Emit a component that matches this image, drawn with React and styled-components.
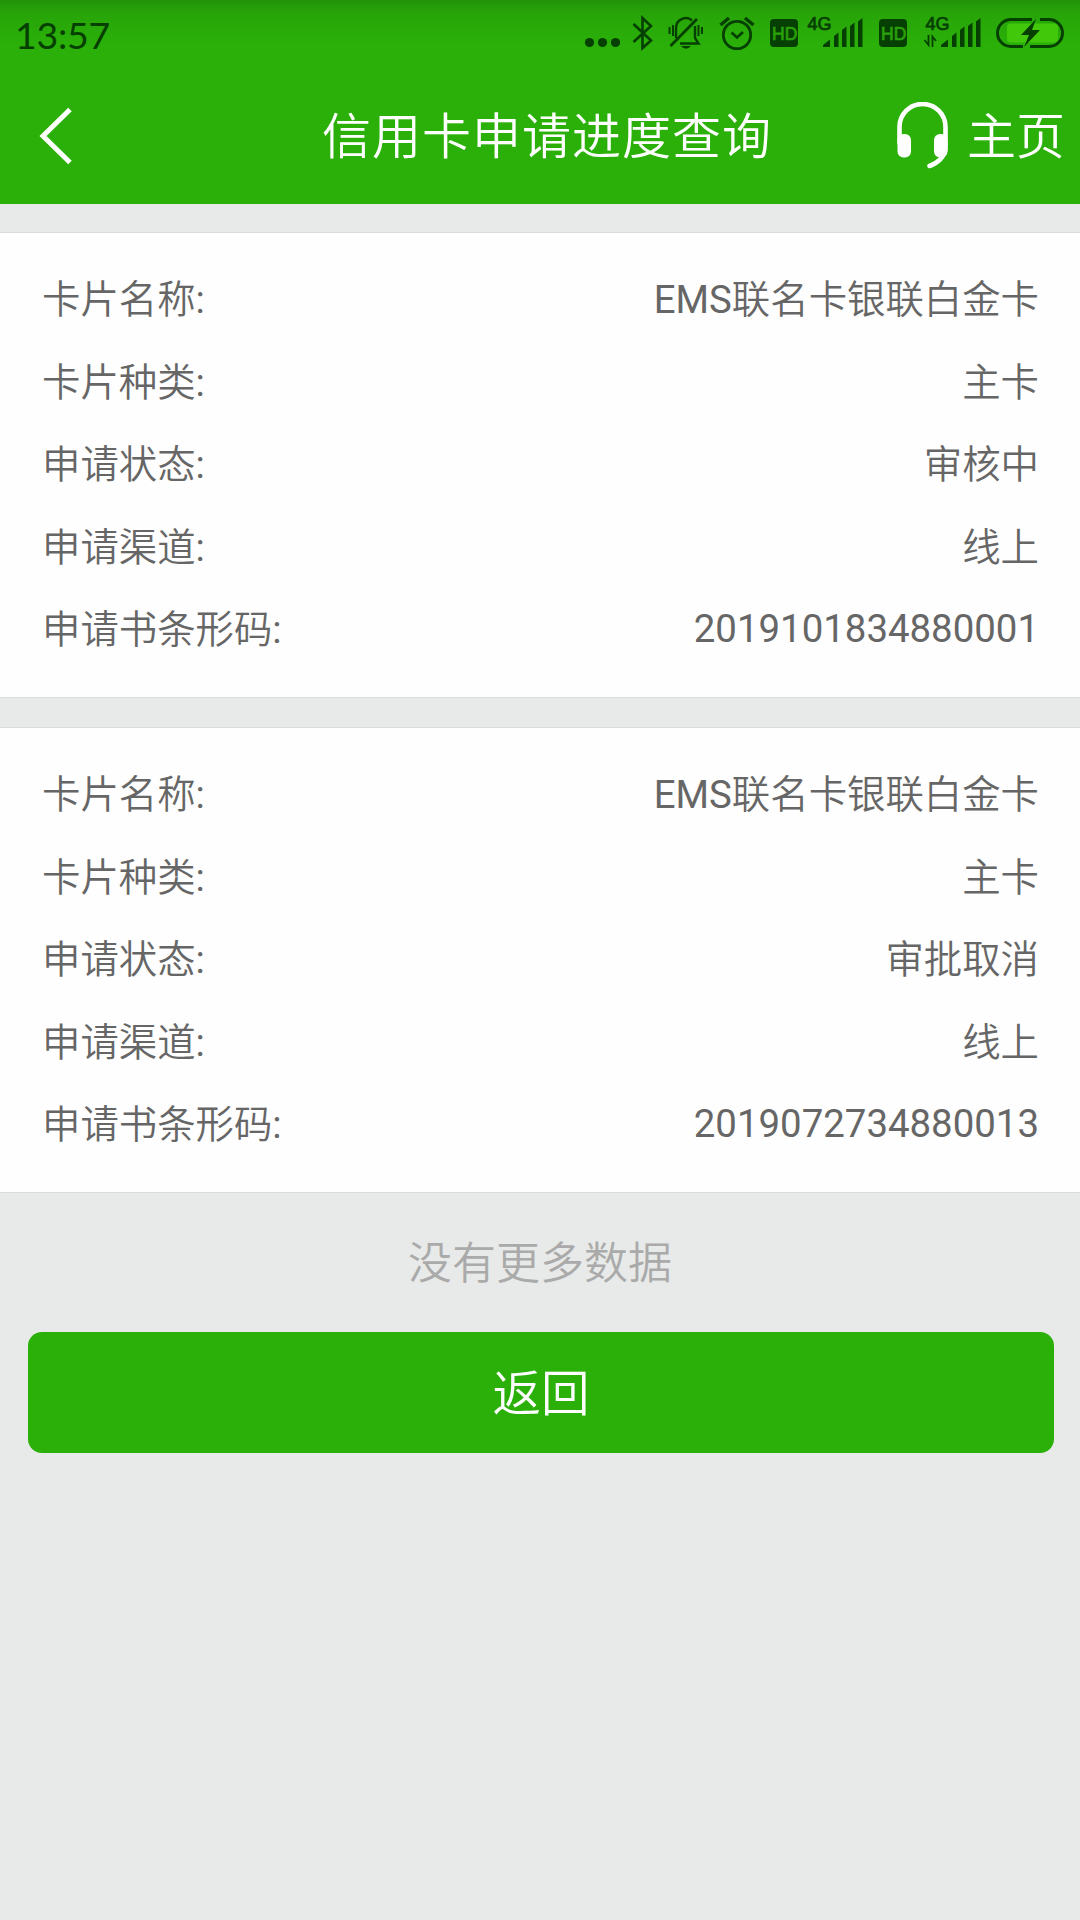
import React from 'react'
import styled, { createGlobalStyle } from 'styled-components'

const GlobalStyle = createGlobalStyle`
  * {
    box-sizing: border-box;
  }

  body {
    margin: 0;
    background-color: #e8eae9;
    font-family: Roboto, 'Noto Sans CJK SC', sans-serif;
  }
`

const Container = styled.div`
  display: flex;
  flex-direction: column;
  min-height: 1920px;
  background-color: #e8eae9;
`

const Header = styled.header`
  height: 204px;
  color: #fff;
  background: linear-gradient(#229408 0, #28a509 14px, #2ab009 44px, #2ab009 100%);
`

const StatusBar = styled.div`
  display: flex;
  justify-content: space-between;
  height: 68px;
  padding: 0 15px 0 15px;
  color: #063f02;
`

const Time = styled.div`
  padding-top: 11px;
  font-family: Lato, sans-serif;
  font-size: 37.5px;
  line-height: 48px;
  letter-spacing: -0.3px;
`

const Icons = styled.div`
  display: flex;
  align-items: flex-start;
`

const Icon = styled.svg`
  display: block;
  flex: none;
  width: ${(props) => props.$w}px;
  height: 68px;
  margin-left: ${(props) => props.$gap || 0}px;
  fill: none;
  stroke: currentColor;
  stroke-width: 2.4;
`

const NavBar = styled.div`
  display: grid;
  grid-template-columns: 322px 1fr 185px;
  align-items: center;
  height: 136px;
`

const Back = styled.button`
  display: flex;
  padding: 0 0 0 36px;
  border: none;
  background: none;
  color: inherit;
`

const Title = styled.h1`
  margin: 0;
  padding-top: 4px;
  font-size: 49px;
  font-weight: 350;
  line-height: 72px;
  letter-spacing: 1px;
  white-space: nowrap;
`

const Home = styled.div`
  display: flex;
  align-items: center;
  justify-content: flex-end;
  gap: 19px;
  padding-right: 15px;
  font-size: 49px;
  font-weight: 350;
  line-height: 72px;
  white-space: nowrap;
`

const HomeLabel = styled.span`
  padding-top: 4px;
`

const List = styled.main`
  display: flex;
  flex-direction: column;
  gap: 29px;
  padding-top: 28px;
`

const Card = styled.section`
  height: 466px;
  padding: 22px 41px 0 42px;
  border-top: 1px solid #dadcdb;
  border-bottom: 1px solid #dadcdb;
  background-color: #fefefe;
`

const Row = styled.div`
  display: flex;
  align-items: center;
  justify-content: space-between;
  height: 82.5px;
  font-size: 38.4px;
  font-weight: 350;
  color: #666;
`

const Latin = styled.span`
  font-weight: 400;
`

const Code = styled(Latin)`
  padding-top: 4px;
`

const Empty = styled.div`
  padding-top: 37px;
  font-size: 44px;
  font-weight: 350;
  line-height: 68px;
  text-align: center;
  color: #aaa;
`

const Button = styled.button`
  height: 121px;
  margin: 34px 26px 0 28px;
  padding: 0 0 5px;
  border: none;
  border-radius: 14px;
  background-color: #2ab009;
  font-family: inherit;
  font-size: 48.5px;
  font-weight: 350;
  color: #fff;
`

const IconText = styled.text`
  font-family: 'Liberation Sans', sans-serif;
  font-size: ${(props) => props.$size}px;
  fill: ${(props) => props.$fill || 'currentColor'};
  stroke: ${(props) => props.$fill || 'currentColor'};
  stroke-width: 0.7;
`

const Dots = () => (
  <Icon $w={36} viewBox="584 0 36 68">
    <g fill="currentColor" stroke="none">
      <circle cx="589.5" cy="42.5" r="4.6" />
      <circle cx="602.5" cy="42.5" r="4.6" />
      <circle cx="615.5" cy="42.5" r="4.6" />
    </g>
  </Icon>
)

const Bluetooth = () => (
  <Icon $w={22} $gap={12} viewBox="632 0 22 68">
    <path d="M633.5 24 651 40.5 642.5 48V18L651 26 633.5 42" strokeWidth="2.6" />
  </Icon>
)

const Mute = () => (
  <Icon $w={36} $gap={14} viewBox="668 0 36 68">
    <path d="M676 38V29Q676 21 682 19Q686 17 690 19L692 20.5" />
    <path d="M680 43.5H698.5L695 38V26" />
    <path d="M670.5 46 697 19" strokeWidth="2.8" />
    <path d="M669.5 27V34M673 25V36M698.5 25V36M702 27V34" strokeWidth="2" />
    <path d="M681 46H691Q686 51.5 681 46Z" fill="currentColor" stroke="none" />
  </Icon>
)

const Alarm = () => (
  <Icon $w={36} $gap={15} viewBox="719 0 36 68">
    <circle cx="737" cy="35" r="13.7" strokeWidth="2.8" />
    <path d="M731.5 32.5 737 37.5 743 32" strokeWidth="2.6" />
    <path d="M720.5 25 729 18M745 18 753.5 25" strokeWidth="3.4" />
  </Icon>
)

const Hd = ({ gap }) => (
  <Icon $w={28} $gap={gap} viewBox="0 0 28 68">
    <rect y="19" width="28" height="28" rx="4" fill="currentColor" stroke="none" />
    <IconText x="2" y="39.5" $size={17.5} $fill="#2aa00a">
      HD
    </IconText>
  </Icon>
)

const Signal = ({ gap, data }) => (
  <Icon $w={57} $gap={gap} viewBox="0 0 57 68">
    <IconText x="1.5" y="29.5" $size={18}>
      4G
    </IconText>
    <g fill="currentColor" stroke="none">
      <path d="M17 47V45L24 39.5V47Z" />
      <path d="M28 47V36L32.5 32.5V47Z" />
      <path d="M36 47V30L40.5 26.5V47Z" />
      <path d="M44 47V26L48.5 22.5V47Z" />
      <path d="M52 47V21.5L56.5 18V47Z" />
    </g>
    {data && <path d="M.5 40 4.5 45V35M8.5 47V36.5L12 41" strokeWidth="1.8" />}
  </Icon>
)

const Battery = () => (
  <Icon $w={69} $gap={15} viewBox="996 0 69 68">
    <rect x="1007" y="23.5" width="51" height="19" rx="4" fill="#42c80b" stroke="none" />
    <path
      d="M1032 19.5H1011A13.5 13.5 0 0 0 1011 46.5H1023M1040 19.5H1049A13.5 13.5 0 0 1 1049 46.5H1030"
      strokeWidth="3"
    />
    <path d="M1036 19 1021 35H1029L1024 47 1040 30H1032Z" fill="currentColor" stroke="none" />
  </Icon>
)

const BackArrow = () => (
  <svg width="40" height="60" viewBox="36 106 40 60" fill="none" stroke="#fff" strokeWidth="5">
    <path d="M70 109.5 43 136 70 162.5" />
  </svg>
)

const Headset = () => (
  <svg width="51" height="68" viewBox="897 101 51 68" fill="none" stroke="#fff">
    <path
      d="M899.5 142V126A22.5 22.5 0 0 1 945.5 126V148Q943 160 929.5 165"
      strokeWidth="4.6"
      strokeLinecap="round"
    />
    <rect x="897.5" y="133" width="13.5" height="23.5" rx="6" fill="#fff" stroke="none" />
    <rect x="934" y="133" width="13.5" height="23.5" rx="6" fill="#fff" stroke="none" />
  </svg>
)

const Label = ({ children }) => (
  <span>
    {children}
    <Latin>:</Latin>
  </span>
)

const records = [
  {
    brand: 'EMS',
    name: '联名卡银联白金卡',
    type: '主卡',
    status: '审核中',
    channel: '线上',
    code: '2019101834880001',
  },
  {
    brand: 'EMS',
    name: '联名卡银联白金卡',
    type: '主卡',
    status: '审批取消',
    channel: '线上',
    code: '2019072734880013',
  },
]

const App = () => {
  return (
    <Container>
      <GlobalStyle />
      <Header>
        <StatusBar>
          <Time>13:57</Time>
          <Icons>
            <Dots />
            <Bluetooth />
            <Mute />
            <Alarm />
            <Hd gap={15} />
            <Signal gap={8} />
            <Hd gap={16} />
            <Signal gap={17} data />
            <Battery />
          </Icons>
        </StatusBar>
        <NavBar>
          <Back>
            <BackArrow />
          </Back>
          <Title>信用卡申请进度查询</Title>
          <Home>
            <Headset />
            <HomeLabel>主页</HomeLabel>
          </Home>
        </NavBar>
      </Header>
      <List>
        {records.map((item) => (
          <Card key={item.code}>
            <Row>
              <Label>卡片名称</Label>
              <span>
                <Latin>{item.brand}</Latin>
                {item.name}
              </span>
            </Row>
            <Row>
              <Label>卡片种类</Label>
              <span>{item.type}</span>
            </Row>
            <Row>
              <Label>申请状态</Label>
              <span>{item.status}</span>
            </Row>
            <Row>
              <Label>申请渠道</Label>
              <span>{item.channel}</span>
            </Row>
            <Row>
              <Label>申请书条形码</Label>
              <Code>{item.code}</Code>
            </Row>
          </Card>
        ))}
      </List>
      <Empty>没有更多数据</Empty>
      <Button>返回</Button>
    </Container>
  )
}

export default App
